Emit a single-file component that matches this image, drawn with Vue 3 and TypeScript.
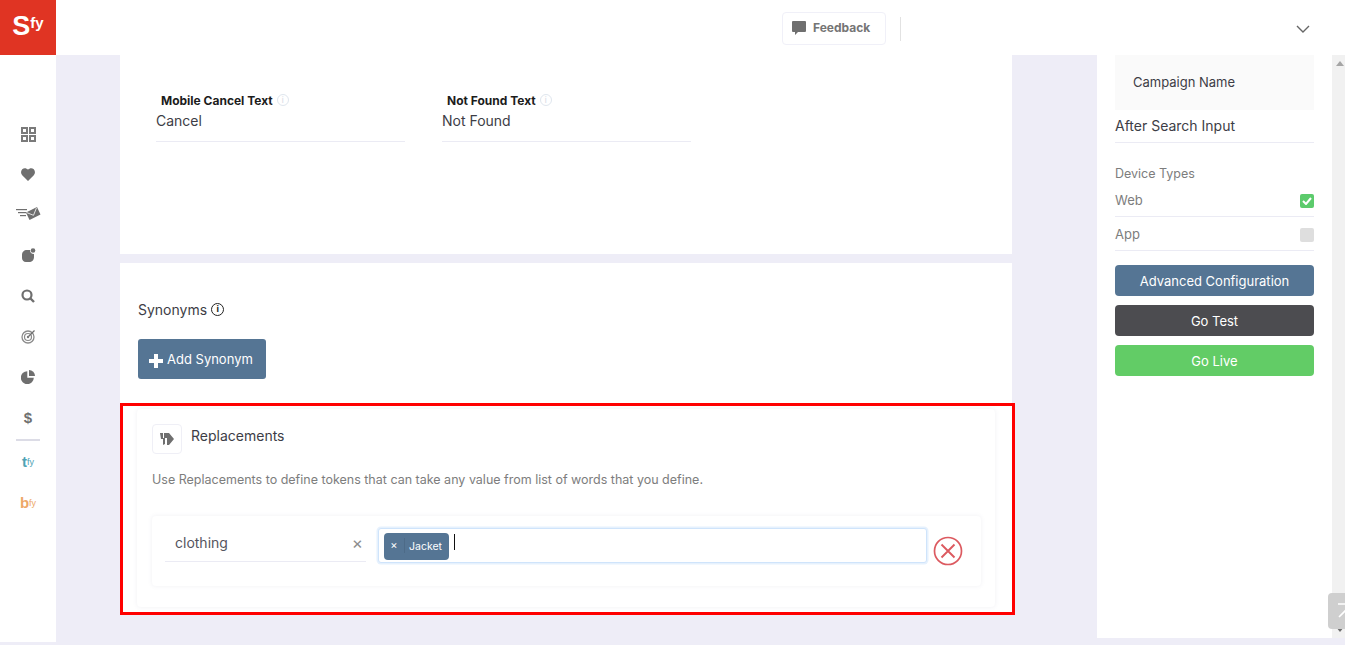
<template>
  <div class="app">
    <aside class="sidebar">
      <div class="logo"><span class="logo-s">S</span><span class="logo-fy">fy</span></div>
      <nav class="side-nav">
        <a class="nav-item">
          <svg width="15" height="15" viewBox="0 0 15 15"><g fill="none" stroke="#7a7a7a" stroke-width="2"><rect x="1" y="1" width="5" height="5" /><rect x="9" y="1" width="5" height="5" /><rect x="1" y="9" width="5" height="5" /><rect x="9" y="9" width="5" height="5" /></g></svg>
        </a>
        <a class="nav-item">
          <svg width="14" height="13" viewBox="0 0 14 13"><path fill="#6f6f6f" d="M7 13 1.2 7.2C-.4 5.5-.3 2.9 1.200 1.300 2.800-.3 5.300-.2 7 1.700 8.700-.2 11.200-.3 12.800 1.300c1.500 1.600 1.600 4.200 0 5.900z" /></svg>
        </a>
        <a class="nav-item">
          <svg width="25" height="16" viewBox="0 0 25 16"><g fill="#6f6f6f"><rect x="0" y="2" width="11" height="1.200" /><rect x="2" y="5" width="9" height="1.200" /><rect x="4" y="8" width="6" height="1.200" /><path d="M10 5.500 21 0l3.500 7.500-11 5.500z" /></g><path d="m10.500 5.500 7 2.800 3-7.500" fill="none" stroke="#fff" stroke-width=".8" /></svg>
        </a>
        <a class="nav-item">
          <svg width="15" height="15" viewBox="0 0 15 15"><path fill="#6f6f6f" d="M1 7c0-3 2-5 5-5h3c0 2.500 1.500 4 4 4v3c0 3-2 5-5 5H5c-2.500 0-4-2-4-4z" /><circle cx="12" cy="2.500" r="2.300" fill="#6f6f6f" /></svg>
        </a>
        <a class="nav-item">
          <svg width="14" height="14" viewBox="0 0 14 14"><circle cx="6" cy="6" r="4.500" fill="none" stroke="#6f6f6f" stroke-width="2.200" /><path d="m9.500 9.500 3.500 3.500" stroke="#6f6f6f" stroke-width="2.400" /></svg>
        </a>
        <a class="nav-item">
          <svg width="15" height="15" viewBox="0 0 15 15"><g fill="none" stroke="#8a8a8a"><circle cx="7" cy="8" r="6" stroke-width="1.300" /><circle cx="7" cy="8" r="3.500" stroke-width="1.200" /><path d="m7 8 6.500-6.500" stroke="#6f6f6f" stroke-width="1.300" /></g><circle cx="7" cy="8" r="1.200" fill="#7a7a7a" /></svg>
        </a>
        <a class="nav-item">
          <svg width="14" height="14" viewBox="0 0 14 14"><path fill="#6f6f6f" d="M6.300 1.200v6.500h6.500A6.500 6.500 0 1 1 6.300 1.200z" /><path fill="#6f6f6f" d="M8 0a6 6 0 0 1 6 6H8z" /></svg>
        </a>
        <a class="nav-item dollar">$</a>
        <div class="side-divider"></div>
        <a class="nav-item brand teal">t<sup>fy</sup></a>
        <a class="nav-item brand orange">b<sup>fy</sup></a>
      </nav>
    </aside>

    <div class="body-col">
      <header class="topbar">
        <button class="feedback">
          <svg width="14" height="15" viewBox="0 0 14 15"><path fill="#6f6f6f" d="M1 1h12a1 1 0 0 1 1 1v9a1 1 0 0 1-1 1H6l-3 3v-3H1a1 1 0 0 1-1-1V2a1 1 0 0 1 1-1z" /></svg>
          Feedback
        </button>
        <span class="top-sep"></span>
        <svg class="chevron" width="14" height="8" viewBox="0 0 14 8"><path d="m1 1 6 6 6-6" fill="none" stroke="#666" stroke-width="1.400" /></svg>
      </header>

      <div class="workspace">
        <main class="content">
          <section class="card card-fields">
            <div class="field" v-for="f in fields" :key="f.label">
              <label class="field-label">{{ f.label }}
                <span class="hint">i</span>
              </label>
              <div class="field-value">{{ f.value }}</div>
            </div>
          </section>

          <section class="card card-synonyms">
            <div class="syn-title">Synonyms <span class="info">i</span></div>
            <button class="add-btn"><span class="plus"></span>Add Synonym</button>
          </section>

          <section class="highlight">
            <div class="rep-card">
              <div class="rep-head">
                <span class="rep-icon">
                  <svg width="14" height="14" viewBox="0 0 14 14"><path fill="#6f6f6f" d="M4 1h5l5 6-5 6H7V6H4z" /><path fill="#6f6f6f" d="M0 1h3v5h2v6L3 13V7H1z" /></svg>
                </span>
                <span class="rep-title">Replacements</span>
              </div>
              <p class="rep-desc">Use Replacements to define tokens that can take any value from list of words that you define.</p>
              <div class="rep-row">
                <div class="token-input">
                  <span>clothing</span>
                  <span class="clear">×</span>
                </div>
                <div class="tags-input">
                  <span class="tag"><span class="tag-x">×</span><span class="tag-label">Jacket</span></span>
                  <span class="caret"></span>
                </div>
                <svg class="remove" width="30" height="30" viewBox="0 0 30 30"><circle cx="15" cy="15" r="13.500" fill="none" stroke="#dc5a60" stroke-width="1.700" /><path d="m8.500 8.500 13 13m0-13-13 13" stroke="#dc5a60" stroke-width="1.900" /></svg>
              </div>
            </div>
          </section>
        </main>

        <aside class="panel">
          <div class="campaign">Campaign Name</div>
          <div class="after-search">After Search Input</div>
          <div class="device-title">Device Types</div>
          <div class="device" v-for="d in devices" :key="d.name">
            <span>{{ d.name }}</span>
            <span class="check" :class="{ on: d.on }">
              <svg v-if="d.on" width="10" height="8" viewBox="0 0 10 8"><path d="m1 4 3 3 5-6" fill="none" stroke="#fff" stroke-width="2" /></svg>
            </span>
          </div>
          <button class="panel-btn blue">Advanced Configuration</button>
          <button class="panel-btn dark">Go Test</button>
          <button class="panel-btn green">Go Live</button>
          <button class="to-top">
            <svg width="18" height="16" viewBox="0 0 18 16"><path d="M1 1h16M2 14l7-7 7 7" fill="none" stroke="#fff" stroke-width="1.600" /></svg>
          </button>
        </aside>

        <div class="scrollbar">
          <span class="arrow up"></span>
          <span class="arrow down"></span>
        </div>
      </div>
    </div>
  </div>
</template>

<script setup lang="ts">
interface Field {
  label: string
  value: string
}

interface Device {
  name: string
  on: boolean
}

const fields: Field[] = [
  { label: 'Mobile Cancel Text', value: 'Cancel' },
  { label: 'Not Found Text', value: 'Not Found' }
]

const devices: Device[] = [
  { name: 'Web', on: true },
  { name: 'App', on: false }
]
</script>

<style>
html, body {
  margin: 0;
  overflow: hidden;
}
</style>

<style scoped>
.app {
  display: flex;
  width: 1345px;
  height: 645px;
  overflow: hidden;
  background: #eeedf7;
  font-family: Inter, "Open Sans", sans-serif;
  color: #3d3d46;
}

/* sidebar */
.sidebar {
  width: 56px;
  height: 642px;
  flex: none;
  background: #fff;
}

.logo {
  height: 55px;
  background: #e03423;
  color: #fff;
  display: flex;
  justify-content: center;
  padding-top: 13px;
  box-sizing: border-box;
  font-family: "Liberation Sans", sans-serif;
  font-weight: 700;
}

.logo-s {
  font-size: 27px;
  line-height: 27px;
}

.logo-fy {
  font-size: 15px;
  line-height: 15px;
  margin-top: 2px;
}

.side-nav {
  padding-top: 59px;
  display: flex;
  flex-direction: column;
  align-items: center;
}

.nav-item {
  height: 40.500px;
  width: 56px;
  display: flex;
  align-items: center;
  justify-content: center;
}

.dollar {
  font-family: "Liberation Sans", sans-serif;
  font-weight: 700;
  font-size: 15px;
  color: #6f6f6f;
}

.side-divider {
  width: 24px;
  height: 2px;
  background: #dcdce6;
  margin: 1px 0 0;
}

.brand {
  font-family: "Liberation Sans", sans-serif;
  font-weight: 700;
  font-size: 15px;
  height: 41px;
}

.brand sup {
  font-size: 9px;
  font-weight: 400;
  line-height: 0;
}

.teal { color: #4fa3b5; }
.orange { color: #eda868; }

/* top bar */
.body-col {
  flex: 1;
  min-width: 0;
  display: flex;
  flex-direction: column;
}

.topbar {
  height: 55px;
  flex: none;
  box-sizing: border-box;
  background: #fff;
  display: flex;
  align-items: center;
  padding: 0 35px 5px 726px;
}

.feedback {
  height: 33px;
  width: 104px;
  box-sizing: border-box;
  margin-top: 7px;
  padding: 0 0 3px 9px;
  background: #fff;
  border: 1px solid #f0f0f8;
  border-radius: 4px;
  display: flex;
  align-items: center;
  gap: 7px;
  font-family: inherit;
  font-size: 12px;
  font-weight: 700;
  color: #757575;
}

.top-sep {
  width: 1px;
  height: 24px;
  background: #e2e2e2;
  margin: 7px 0 0 14px;
}

.chevron {
  margin: 8px 0 0 auto;
}

/* main area */
.workspace {
  flex: 1;
  min-height: 0;
  display: flex;
  align-items: flex-start;
}

.content {
  width: 895px;
  margin-left: 64px;
  flex: none;
}

.card {
  background: #fff;
  width: 892px;
  box-sizing: border-box;
}

.card-fields {
  height: 199px;
  display: flex;
  gap: 37px;
  padding: 36px 0 0 36px;
  margin-bottom: 9px;
}

.field {
  width: 249px;
}

.field-label {
  display: flex;
  align-items: center;
  gap: 4px;
  height: 18px;
  padding-left: 5px;
  font-size: 12px;
  font-weight: 700;
  color: #1c1c1c;
}

.hint {
  width: 12px;
  height: 12px;
  box-sizing: border-box;
  border: 1px solid #dfe6ee;
  border-radius: 50%;
  color: #cfd8e2;
  font-size: 8px;
  font-weight: 400;
  line-height: 10px;
  text-align: center;
}

.field-value {
  height: 33px;
  line-height: 24px;
  box-sizing: border-box;
  border-bottom: 1px solid #ebebf4;
  font-size: 14px;
  color: #3d3d46;
}

.card-synonyms {
  height: 140px;
  padding: 36px 0 0 18px;
}

.syn-title {
  display: flex;
  align-items: center;
  gap: 4px;
  height: 20px;
  font-size: 14px;
  color: #3d3d46;
}

.info {
  width: 13px;
  height: 13px;
  box-sizing: border-box;
  border: 1.500px solid #222;
  border-radius: 50%;
  font-size: 9px;
  font-weight: 700;
  line-height: 10px;
  text-align: center;
  color: #222;
}

.add-btn {
  margin-top: 20px;
  width: 128px;
  height: 40px;
  border: 0;
  border-radius: 3px;
  background: #557594;
  color: #fff;
  font-family: inherit;
  font-size: 13px;
  display: flex;
  align-items: center;
  padding: 0 0 0 11px;
  gap: 4px;
}

.plus {
  width: 14px;
  height: 14px;
  margin-top: 3px;
  background:
    linear-gradient(#fff, #fff) center / 14px 4px no-repeat,
    linear-gradient(#fff, #fff) center / 4px 14px no-repeat;
}

/* replacements */
.highlight {
  width: 895px;
  height: 212px;
  box-sizing: border-box;
  border: 3px solid #f00;
  background: #fff;
  padding: 3px 17px 5px 14px;
}

.rep-card {
  height: 100%;
  box-sizing: border-box;
  border-radius: 4px;
  box-shadow: 0 0 4px rgba(120, 120, 160, 0.12);
  padding: 15px 14px 0 15px;
}

.rep-head {
  display: flex;
  align-items: flex-start;
  gap: 9px;
}

.rep-icon {
  width: 30px;
  height: 30px;
  box-sizing: border-box;
  border: 1px solid #efeff6;
  border-radius: 4px;
  display: flex;
  align-items: center;
  justify-content: center;
}

.rep-title {
  font-size: 14px;
  line-height: 24px;
  color: #3d3d46;
}

.rep-desc {
  margin: 16px 0 0;
  font-size: 12.500px;
  line-height: 20px;
  color: #7d7d7d;
}

.rep-row {
  margin-top: 26px;
  height: 70px;
  box-sizing: border-box;
  border-radius: 4px;
  box-shadow: 0 0 4px rgba(120, 120, 160, 0.12);
  display: flex;
  align-items: flex-start;
  padding: 11px 0 0 13px;
}

.token-input {
  width: 201px;
  height: 35px;
  box-sizing: border-box;
  border-bottom: 1px solid #ebebf4;
  display: flex;
  justify-content: space-between;
  align-items: center;
  padding: 0 3px 3px 10px;
  font-size: 14px;
  color: #55555e;
}

.clear {
  color: #8d8d8d;
  font-size: 17px;
}

.tags-input {
  width: 549px;
  height: 35px;
  margin: 1px 0 0 12px;
  box-sizing: border-box;
  border: 1px solid #cfe4fb;
  box-shadow: 0 0 0 1.500px #e6f1fd;
  border-radius: 3px;
  background: #fff;
  display: flex;
  align-items: flex-start;
  padding: 4px 0 0 5px;
}

.tag {
  width: 65px;
  height: 27px;
  border-radius: 4px;
  background: #557594;
  color: #fff;
  display: flex;
  align-items: center;
  font-size: 10.500px;
}

.tag-x {
  width: 21px;
  text-align: center;
  font-size: 11px;
  margin-top: -2px;
  border-right: 1px solid #4d6b88;
  box-sizing: border-box;
  height: 15px;
  line-height: 15px;
}

.tag-label {
  margin-left: 4px;
}

.caret {
  width: 1px;
  height: 16px;
  background: #111;
  margin: 1px 0 0 5px;
}

.remove {
  margin: 9px 0 0 6px;
}

/* right panel */
.panel {
  position: relative;
  margin-left: 82px;
  width: 235px;
  height: 583px;
  flex: none;
  box-sizing: border-box;
  background: #fff;
  padding: 0 18px;
}

.campaign {
  height: 55px;
  background: #fafafa;
  padding: 0 18px;
  line-height: 55px;
  font-size: 13px;
  color: #3d3d46;
}

.after-search {
  height: 33px;
  line-height: 32px;
  box-sizing: border-box;
  border-bottom: 1px solid #ebebf4;
  font-size: 14px;
  color: #3d3d46;
}

.device-title {
  margin-top: 22px;
  height: 18px;
  line-height: 18px;
  font-size: 12.500px;
  color: #7d7d7d;
}

.device {
  height: 34px;
  box-sizing: border-box;
  border-bottom: 1px solid #ebebf4;
  display: flex;
  justify-content: space-between;
  align-items: center;
  font-size: 13px;
  color: #7d7d7d;
}

.device:first-of-type {
  margin-top: 11px;
}

.check {
  width: 14px;
  height: 14px;
  margin-top: 3px;
  border-radius: 2px;
  background: #dedede;
  display: flex;
  align-items: center;
  justify-content: center;
}

.check.on {
  background: #5ccb6c;
}

.panel-btn {
  display: block;
  width: 199px;
  height: 31px;
  border: 0;
  border-radius: 4px;
  margin-top: 9px;
  color: #fff;
  font-family: inherit;
  font-size: 13px;
}

.device + .panel-btn {
  margin-top: 14px;
}

.blue { background: #557594; }
.dark { background: #4c4c50; }
.green { background: #62cc66; }

.to-top {
  position: absolute;
  right: -32px;
  bottom: 9px;
  width: 36px;
  height: 36px;
  border: 0;
  padding: 0;
  border-radius: 4px;
  background: #cfcfcf;
  display: flex;
  align-items: center;
  justify-content: center;
  z-index: 1;
}

.scrollbar {
  width: 16px;
  height: 583px;
  flex: none;
  background: #f1f1f1;
  display: flex;
  flex-direction: column;
  justify-content: space-between;
  align-items: center;
  padding: 6px 0;
  box-sizing: border-box;
}

.arrow {
  width: 0;
  height: 0;
  border-left: 4px solid transparent;
  border-right: 4px solid transparent;
}

.arrow.up { border-bottom: 5px solid #a5a5a5; }
.arrow.down { border-top: 5px solid #6e6e6e; }
</style>
